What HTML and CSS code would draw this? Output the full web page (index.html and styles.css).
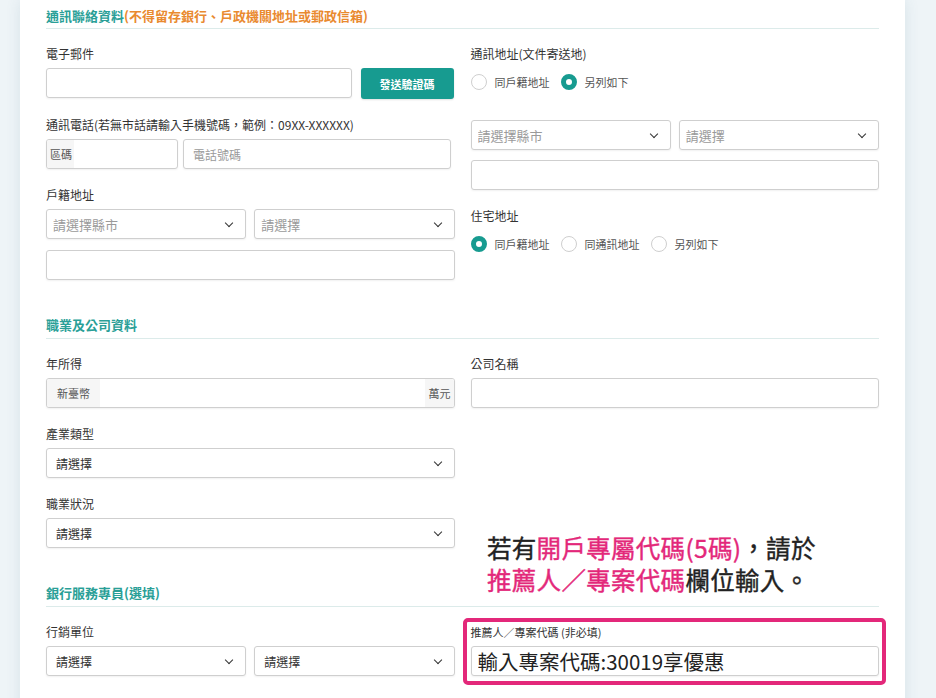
FILE: index.html
```html
<!DOCTYPE html>
<html lang="zh-Hant">
  <head>
    <meta charset="utf-8" />
    <meta name="viewport" content="width=device-width, initial-scale=1.0" />
    <title>線上開戶 - 基本資料</title>
    <link rel="stylesheet" href="styles.css">
  </head>
  <body>
    <div class="page">
      <div class="card">

        <!-- 通訊聯絡資料 -->
        <section class="block">
          <h3 class="block-title">通訊聯絡資料<span class="warn">(不得留存銀行、戶政機關地址或郵政信箱)</span></h3>
          <div class="cols">
            <div class="col">
              <div class="field">
                <label class="field-label">電子郵件</label>
                <div class="row email-row">
                  <input class="input grow" type="email" />
                  <button class="btn-send" type="button">發送驗證碼</button>
                </div>
              </div>
              <div class="field">
                <label class="field-label">通訊電話(若無市話請輸入手機號碼，範例：09XX-XXXXXX)</label>
                <div class="row phone-row">
                  <div class="input-group area">
                    <span class="addon addon-area">區碼</span>
                    <input class="bare" type="text" />
                  </div>
                  <input class="input grow" type="text" placeholder="電話號碼" />
                </div>
              </div>
              <div class="field">
                <label class="field-label">戶籍地址</label>
                <div class="row addr-row">
                  <div class="select-wrap grow">
                    <select class="select empty"><option>請選擇縣市</option></select>
                  </div>
                  <div class="select-wrap grow">
                    <select class="select empty"><option>請選擇</option></select>
                  </div>
                </div>
                <input class="input full addr-line" type="text" />
              </div>
            </div>

            <div class="col">
              <div class="field">
                <label class="field-label">通訊地址(文件寄送地)</label>
                <div class="radios">
                  <label class="radio"><input type="radio" name="mail" /><span class="dot"></span>同戶籍地址</label>
                  <label class="radio"><input type="radio" name="mail" checked /><span class="dot"></span>另列如下</label>
                </div>
                <div class="row addr-row mail-addr">
                  <div class="select-wrap grow">
                    <select class="select empty"><option>請選擇縣市</option></select>
                  </div>
                  <div class="select-wrap grow">
                    <select class="select empty"><option>請選擇</option></select>
                  </div>
                </div>
                <input class="input full addr-line" type="text" />
              </div>
              <div class="field">
                <label class="field-label">住宅地址</label>
                <div class="radios">
                  <label class="radio"><input type="radio" name="home" checked /><span class="dot"></span>同戶籍地址</label>
                  <label class="radio"><input type="radio" name="home" /><span class="dot"></span>同通訊地址</label>
                  <label class="radio"><input type="radio" name="home" /><span class="dot"></span>另列如下</label>
                </div>
              </div>
            </div>
          </div>
        </section>

        <!-- 職業及公司資料 -->
        <section class="block">
          <h3 class="block-title">職業及公司資料</h3>
          <div class="cols">
            <div class="col">
              <div class="field">
                <label class="field-label">年所得</label>
                <div class="input-group">
                  <span class="addon addon-left">新臺幣</span>
                  <input class="bare" type="text" />
                  <span class="addon addon-right">萬元</span>
                </div>
              </div>
              <div class="field">
                <label class="field-label">產業類型</label>
                <div class="select-wrap">
                  <select class="select"><option>請選擇</option></select>
                </div>
              </div>
              <div class="field">
                <label class="field-label">職業狀況</label>
                <div class="select-wrap">
                  <select class="select"><option>請選擇</option></select>
                </div>
              </div>
            </div>
            <div class="col">
              <div class="field">
                <label class="field-label">公司名稱</label>
                <input class="input full" type="text" />
              </div>
            </div>
          </div>
        </section>

        <!-- 銀行服務專員 -->
        <section class="block staff">
          <p class="promo">
            若有<em>開戶專屬代碼(5碼)</em>，請於<br />
            <em>推薦人／專案代碼</em>欄位輸入。
          </p>
          <h3 class="block-title">銀行服務專員(選填)</h3>
          <div class="cols">
            <div class="col">
              <div class="field">
                <label class="field-label">行銷單位</label>
                <div class="row addr-row">
                  <div class="select-wrap grow">
                    <select class="select"><option>請選擇</option></select>
                  </div>
                  <div class="select-wrap grow">
                    <select class="select"><option>請選擇</option></select>
                  </div>
                </div>
              </div>
            </div>
            <div class="col">
              <div class="field referrer">
                <label class="field-label small">推薦人／專案代碼 (非必填)</label>
                <input class="input full code-input" type="text" value="輸入專案代碼:30019享優惠" />
              </div>
            </div>
          </div>
        </section>

      </div>
    </div>
  </body>
</html>
```

FILE: styles.css
```css
body {
  margin: 0;
  font-family: "Noto Sans CJK TC", "Noto Sans", "Liberation Sans", sans-serif;
  color: #333;
  background-color: #eef4f7;
}

.page {
  padding-left: 20px;
  height: 698px;
  overflow: hidden;
}

.card {
  width: 833px;
  padding: 7px 26px 40px;
  background: #fff;
  box-shadow: 0 0 14px rgba(60, 110, 130, 0.12);
}

/* section blocks */
.block {
  margin-bottom: 36px;
}

.block-title {
  margin: 0 0 16px;
  padding-bottom: 3px;
  font-size: 13px;
  line-height: 18px;
  font-weight: bold;
  color: #2a9f97;
  border-bottom: 1px solid #dcebea;
}

.block + .block .block-title {
  padding-bottom: 4px;
}

.block + .block {
  margin-top: 1px;
}

.block-title .warn {
  color: #e98a2f;
}

.cols {
  display: grid;
  grid-template-columns: 1fr 1fr;
  column-gap: 16px;
}

.field {
  margin-bottom: 17px;
}

.field:last-child {
  margin-bottom: 0;
}

.field-label {
  display: block;
  font-size: 12px;
  line-height: 18px;
  margin-bottom: 5px;
  color: #333;
}

.field-label.small {
  font-size: 11px;
}

.row {
  display: flex;
}

.grow {
  flex: 1;
  min-width: 0;
}

/* inputs */
.input {
  box-sizing: border-box;
  height: 30px;
  padding: 0 9px;
  font-family: inherit;
  font-size: 12px;
  color: #333;
  border: 1px solid #cfcfcf;
  border-radius: 3px;
  box-shadow: 0 1px 2px rgba(0, 0, 0, 0.06);
  background: #fff;
}

.input::placeholder {
  color: #9a9a9a;
}

.input.full {
  display: block;
  width: 100%;
}

.email-row {
  gap: 9px;
  margin-right: 1px;
}

.btn-send {
  width: 93px;
  height: 31px;
  border: none;
  border-radius: 3px;
  background: #179b90;
  color: #fff;
  font-family: inherit;
  font-size: 11px;
  font-weight: bold;
  box-shadow: 0 1px 2px rgba(0, 0, 0, 0.12);
}

.phone-row {
  gap: 5px;
  margin-right: 4px;
}

.input-group {
  box-sizing: border-box;
  display: flex;
  height: 30px;
  border: 1px solid #cfcfcf;
  border-radius: 3px;
  box-shadow: 0 1px 2px rgba(0, 0, 0, 0.06);
  background: #fff;
  overflow: hidden;
}

.input-group.area {
  width: 132px;
}

.input-group .bare {
  flex: 1;
  min-width: 0;
  border: none;
  outline: none;
  background: transparent;
}

.addon {
  display: flex;
  align-items: center;
  font-size: 11px;
  color: #555;
  background: #f6f6f6;
}

.addon-area {
  padding: 0 2px 0 3px;
}

.addon-left {
  padding: 0 10px;
}

.addon-right {
  padding: 0 3px 0 4px;
}

/* selects */
.select-wrap {
  position: relative;
}

.select-wrap::after {
  content: "";
  position: absolute;
  right: 14px;
  top: 11px;
  width: 5px;
  height: 5px;
  border-right: 1.6px solid #333;
  border-bottom: 1.6px solid #333;
  transform: rotate(45deg);
  pointer-events: none;
}

.select {
  box-sizing: border-box;
  width: 100%;
  height: 30px;
  padding: 0 24px 0 9px;
  appearance: none;
  -webkit-appearance: none;
  font-family: inherit;
  font-size: 12px;
  color: #333;
  border: 1px solid #cfcfcf;
  border-radius: 3px;
  box-shadow: 0 1px 2px rgba(0, 0, 0, 0.06);
  background: #fff;
}

.select.empty {
  padding-left: 6px;
  font-size: 13px;
  color: #9a9a9a;
}

.addr-row {
  gap: 8px;
}

.addr-line {
  margin-top: 11px;
}

.mail-addr {
  margin-top: 24px;
}

.mail-addr + .addr-line {
  margin-top: 10px;
}

/* radios */
.radios {
  display: flex;
  align-items: center;
  height: 28px;
}

.radio {
  display: flex;
  align-items: center;
  margin-right: 11px;
  font-size: 11px;
  color: #555;
}

.radio input {
  display: none;
}

.radio .dot {
  box-sizing: border-box;
  width: 16px;
  height: 16px;
  margin-right: 8px;
  border: 1px solid #cfcfcf;
  border-radius: 50%;
  background: #fff;
}

.radio input:checked + .dot {
  border: 5px solid #179b90;
}

/* referral code callout */
.staff {
  position: relative;
}

.promo {
  position: absolute;
  left: 441px;
  top: -52px;
  margin: 0;
  font-size: 24.5px;
  line-height: 32px;
  font-weight: normal;
  letter-spacing: 0.3px;
  -webkit-text-stroke: 0.4px currentColor;
  color: #222;
}

.promo em {
  font-style: normal;
  color: #e3287a;
}

.referrer {
  margin: -5px -7px -9px -8px;
  padding: 1px 3px 5px 4px;
  border: 4px solid #e3287a;
  border-radius: 5px;
}

.code-input {
  padding-left: 6px;
  font-size: 20.5px;
  color: #222;
}
```
